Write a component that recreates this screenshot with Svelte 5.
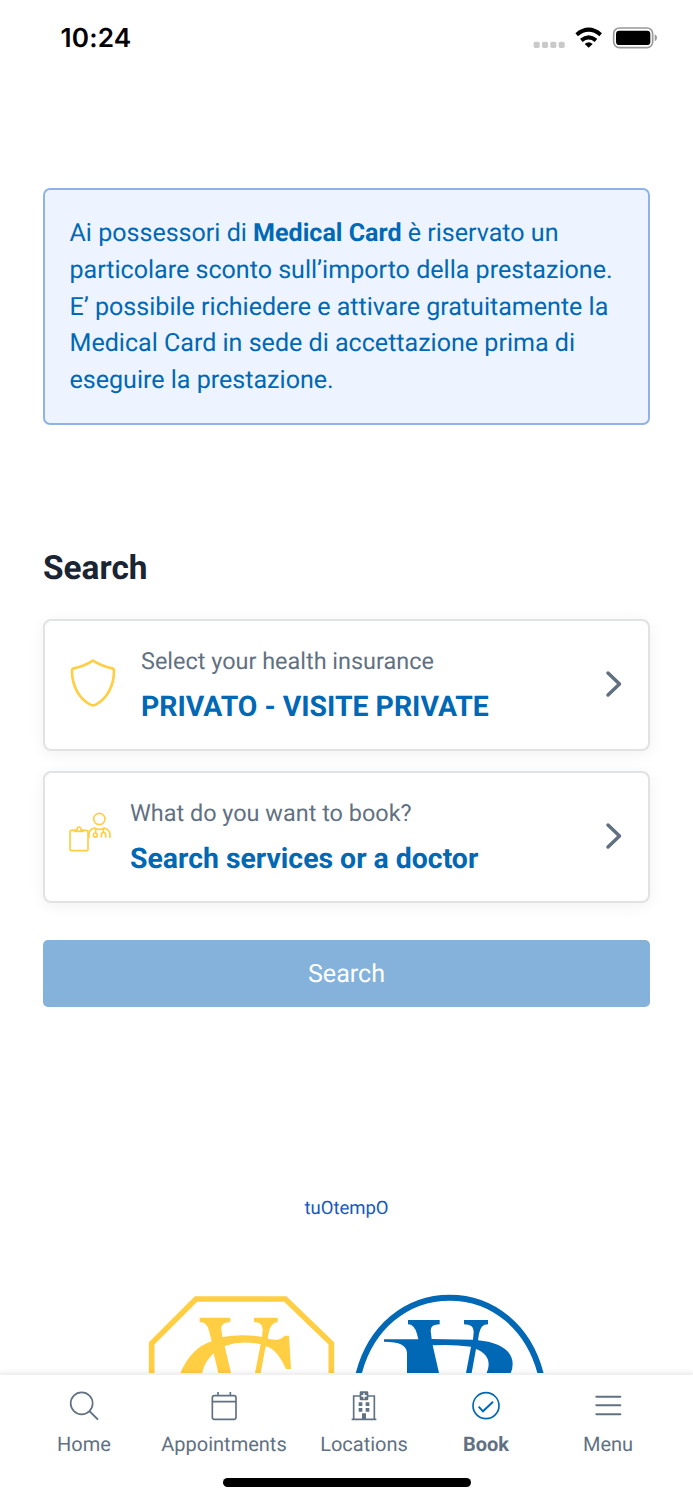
<script>
  const tabs = [
    { id: 'home', label: 'Home', width: 110 },
    { id: 'appointments', label: 'Appointments', width: 170 },
    { id: 'locations', label: 'Locations', width: 110 },
    { id: 'book', label: 'Book', width: 134 },
    { id: 'menu', label: 'Menu', width: 110 },
  ];
</script>

<div class="screen">
  <header class="status">
    <span class="time">10:24</span>
    <svg class="system" viewBox="0 0 450 150" width="150" height="50" aria-hidden="true">
      <g fill="#c9c9c9">
        <rect x="41" y="80" width="18" height="19" rx="5" />
        <rect x="66" y="80" width="18" height="19" rx="5" />
        <rect x="91" y="80" width="18" height="19" rx="5" />
        <rect x="116" y="80" width="18" height="19" rx="5" />
      </g>
      <g fill="none" stroke="#000" stroke-width="12">
        <path d="M170 59 Q206 29 242 59" />
        <path d="M184 76 Q206 58 228 76" />
      </g>
      <path d="M194 87 Q206 76 218 87 L206 98 Z" fill="#000" />
      <rect x="281" y="39" width="117" height="59" rx="17" fill="none" stroke="#999" stroke-width="5" />
      <rect x="288" y="47" width="103" height="43" rx="10" />
      <path d="M404 58 Q411 61 411 68 Q411 76 404 79 Z" fill="#999" />
    </svg>
  </header>

  <main>
    <section class="notice">
      Ai possessori di <b>Medical Card</b> è riservato un<br />
      particolare sconto sull’importo della prestazione.<br />
      E’ possibile richiedere e attivare gratuitamente la<br />
      Medical Card in sede di accettazione prima di<br />
      eseguire la prestazione.
    </section>

    <h1>Search</h1>

    <div class="card">
      <svg class="shield" viewBox="0 0 138 144" width="46" height="48" aria-hidden="true">
        <path d="M69 5 Q38 24 11 28 Q6 29 6 36 C6 80 27 119 61 137 Q69 141 77 137 C111 119 132 80 132 36 Q132 29 127 28 Q100 24 69 5 Z" fill="none" stroke="#ffce43" stroke-width="8" stroke-linejoin="round" />
      </svg>
      <div class="copy">
        <span class="label">Select your health insurance</span>
        <strong>PRIVATO - VISITE PRIVATE</strong>
      </div>
      <svg class="chevron" viewBox="0 0 18 28" width="18" height="28" aria-hidden="true"><path d="M3 3 L14.5 14 L3 25" /></svg>
    </div>

    <div class="card service">
      <svg class="doctor" viewBox="0 0 126 120" width="42" height="40" aria-hidden="true">
        <g fill="none" stroke="#ffce43" stroke-width="5" stroke-linecap="round" stroke-linejoin="round">
          <circle cx="91" cy="21" r="17" />
          <path d="M17 55H7Q3 55 3 59V112Q3 116 7 116H53Q57 116 57 112V59Q57 55 53 55H43" />
          <path d="M18 54H24Q24 45 30 45Q36 45 36 54H42V58H18Z" />
          <path d="M60 76V67Q60 52 76 48Q91 56 106 48Q123 53 123 70V76M80 50V63M103 50V61M97 75V69Q97 61 103 61Q110 61 110 69V75" />
          <circle cx="79" cy="69" r="6" />
        </g>
      </svg>
      <div class="copy">
        <span class="label">What do you want to book?</span>
        <strong>Search services or a doctor</strong>
      </div>
      <svg class="chevron" viewBox="0 0 18 28" width="18" height="28" aria-hidden="true"><path d="M3 3 L14.5 14 L3 25" /></svg>
    </div>

    <button>Search</button>
    <p class="brand">tuOtempO</p>

    <div class="logos">
      <svg viewBox="0 0 615 264" width="205" height="88" aria-hidden="true">
        <path d="M35 270V175L168 42H436L574 175V270" fill="none" stroke="#ffce43" stroke-width="17" />
        <path fill="#ffce43" d="M179 98H271V111Q243 111 244 132L247 156Q308 145 366 156L368 137Q370 112 342 111V98H413V111Q391 113 386 145L383 161Q418 171 434 152H447L453 252H438C422 217 403 190 377 184L362 264H345L362 178Q306 165 254 183L273 264H235L221 205Q195 228 186 264H121Q154 188 215 169L207 137Q201 111 179 111Z" />
      </svg>
      <svg viewBox="0 0 630 264" width="210" height="88" aria-hidden="true">
        <path d="M41 266C77 127 184 38 314 38S551 127 587 266" fill="none" stroke="#0068b4" stroke-width="18" />
        <path fill="#0068b4" d="M189 105H284V118Q257 118 257 137L260 162L384 164L386 142Q388 118 357 118V105H429V118Q407 118 402 146L399 166C459 171 503 196 503 236Q503 252 497 264H425C439 229 428 206 393 192L380 264H363L378 185Q319 177 263 181L282 264H186V205Q187 170 117 170V163H220L216 147Q208 118 189 118Z" />
      </svg>
    </div>
  </main>

  <nav>
    <div class="tabs">
      {#each tabs as tab}
        <div class="tab" class:active={tab.id === 'book'} style:width={`${tab.width}px`}>
          <svg viewBox="0 0 96 96" width="32" height="32" aria-hidden="true">
            {#if tab.id === 'home'}
              <circle cx="41" cy="40" r="33" /><path d="M65 64L90 89" stroke-width="6" />
            {:else if tab.id === 'appointments'}
              <rect x="13" y="17" width="71" height="71" rx="6" /><path d="M13 35H84M30 6V17M67 6V17" />
            {:else if tab.id === 'locations'}
              <path d="M11 88H85M17 88V18H37M59 18H79V88" />
              <path fill="currentColor" stroke="none" fill-rule="evenodd" d="M39 4H57Q61 4 61 8V27Q61 31 57 31H39Q35 31 35 27V8Q35 4 39 4ZM46 9V15H40V20H46V26H50V20H56V15H50V9Z" />
              <path fill="currentColor" stroke="none" d="M32 37H43V48H32ZM53 37H64V48H53ZM32 54H43V65H32ZM53 54H64V65H53ZM42 70H54V89H42Z" />
            {:else if tab.id === 'book'}
              <circle cx="48" cy="47" r="39" /><path d="M26 50L39 64L69 35" stroke-width="6" />
            {:else}
              <path d="M13 20H85M13 46H85M13 73H85" stroke-width="6" stroke-linecap="round" />
            {/if}
          </svg>
          <span>{tab.label}</span>
        </div>
      {/each}
    </div>
    <div class="home-indicator"></div>
  </nav>
</div>

<style>
  :global(body) { margin: 0; background: #fff; }
  * { box-sizing: border-box; }
  svg { display: block; flex: none; }
  .screen { width: 693px; height: 1500px; overflow: hidden; display: flex; flex-direction: column; background: #fff; font-family: Roboto, sans-serif; white-space: nowrap; text-rendering: geometricPrecision; }
  .status { height: 76px; padding: 15px 23px 0 60.5px; display: flex; justify-content: space-between; flex: none; }
  .time { font: 600 26.2px/48px Inter, sans-serif; letter-spacing: .15px; color: #000; }
  main { height: 1297px; padding: 112px 43px 0; display: flex; flex-direction: column; flex: none; overflow: hidden; }
  .notice { height: 237px; flex: none; border: 2px solid #8fb3e7; border-radius: 7px; background: #edf4ff; padding: 26px 24.5px 24px; color: #0068b4; font-size: 25.07px; line-height: 36.8px; }
  .notice b { font-weight: 700; }
  h1 { margin: 119px 0 25px; font-size: 33.4px; line-height: 50px; color: #1a2433; font-weight: 700; flex: none; }
  .card { height: 132px; flex: none; border: 2px solid #e1e2e4; border-radius: 8px; box-shadow: 0 3px 16px rgba(0,0,0,.06); display: flex; align-items: center; padding: 0 25px; background: #fff; }
  .service { margin-top: 20px; }
  .shield { margin-top: -4px; }
  .doctor { margin: -10px 0 0 -1px; }
  .chevron { margin-top: -2px; }
  .copy { margin: 2px 0 0 25px; flex: 1; display: flex; flex-direction: column; }
  .service .copy { margin-left: 19px; }
  .label { font-size: 23.45px; line-height: 36px; color: #617182; }
  .copy strong { margin-top: 6px; font-size: 28.4px; line-height: 44px; color: #0068b4; font-weight: 700; }
  .chevron path { fill: none; stroke: #607081; stroke-width: 3.5; stroke-linecap: round; stroke-linejoin: round; }
  button { margin: 37px 0 0; height: 67px; flex: none; border: 0; border-radius: 5px; background: #84b2da; color: #fff; font: 400 25.1px Roboto, sans-serif; padding: 2px 0 0; text-rendering: inherit; }
  .brand { margin: 185px 0 0; height: 32px; flex: none; text-align: center; color: #155abf; font-size: 18.5px; line-height: 32px; }
  .logos { display: flex; width: 415px; margin: 61px 0 0 97px; flex: none; }
  nav { height: 127px; flex: none; padding-top: 2px; border-top: 2px solid #f0f0f1; box-shadow: 0 -1px 5px rgba(0,0,0,.07); background: #fff; display: flex; flex-direction: column; align-items: center; z-index: 1; }
  .tabs { width: 693px; display: flex; padding: 13px 0 0 29px; height: 101px; }
  .tab { display: flex; flex-direction: column; align-items: center; color: #617182; flex: none; }
  .tab svg { fill: none; stroke: currentColor; stroke-width: 5; }
  .tab span { margin-top: 7px; font-size: 20px; line-height: 30px; }
  .active svg { color: #0068b4; }
  .active span { font-weight: 700; }
  .home-indicator { width: 248px; height: 9px; border-radius: 5px; background: #000; }
</style>
